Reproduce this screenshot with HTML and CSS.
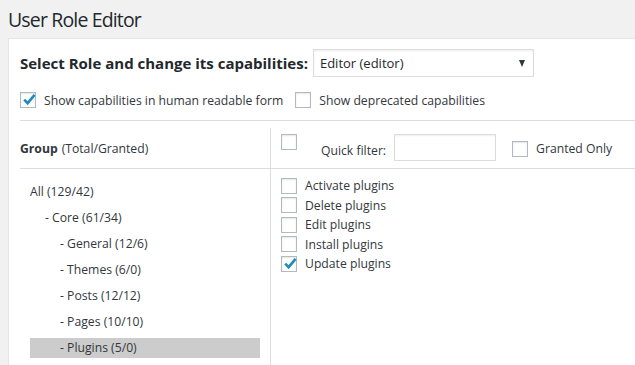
FILE: index.html
```html
<!DOCTYPE html>
<html lang="en">
<head>
    <meta charset="UTF-8">
    <title>User Role Editor</title>
    <link rel="stylesheet" href="styles.css">
</head>
<body>
    <div class="wrap">
        <h1>User Role Editor</h1>
        <div class="panel">
            <div class="role-row">
                <span class="role-label">Select Role and change its capabilities:</span>
                <div class="select">
                    <span>Editor (editor)</span>
                    <span class="arrow"></span>
                </div>
            </div>
            <div class="options">
                <label class="opt">
                    <span class="cb"><svg viewBox="0 0 16 16"><path d="M3.2 7.6 L6.6 11.2 L13.6 2.8"/></svg></span>
                    Show capabilities in human readable form
                </label>
                <label class="opt">
                    <span class="cb"></span>
                    Show deprecated capabilities
                </label>
            </div>

            <div class="editor">
                <div class="head">
                    <div class="head-left"><b>Group</b> (Total/Granted)</div>
                    <div class="head-right">
                        <span class="cb"></span>
                        <span class="qf-label">Quick filter:</span>
                        <span class="qf-input"></span>
                        <label class="granted">
                            <span class="cb"></span>
                            Granted Only
                        </label>
                    </div>
                </div>
                <div class="body">
                    <ul class="groups">
                        <li class="lvl0">All (129/42)</li>
                        <li class="lvl1">- Core (61/34)</li>
                        <li class="lvl2">- General (12/6)</li>
                        <li class="lvl2">- Themes (6/0)</li>
                        <li class="lvl2">- Posts (12/12)</li>
                        <li class="lvl2">- Pages (10/10)</li>
                        <li class="lvl2 active">- Plugins (5/0)</li>
                    </ul>
                    <ul class="caps">
                        <li><span class="cb"></span>Activate plugins</li>
                        <li><span class="cb"></span>Delete plugins</li>
                        <li><span class="cb"></span>Edit plugins</li>
                        <li><span class="cb"></span>Install plugins</li>
                        <li><span class="cb"><svg viewBox="0 0 16 16"><path d="M3.2 7.6 L6.6 11.2 L13.6 2.8"/></svg></span>Update plugins</li>
                    </ul>
                </div>
            </div>
        </div>
    </div>
</body>
</html>
```

FILE: styles.css
```css
/* page */
body {
    margin: 0;
    background-color: #f1f1f1;
    color: #32373c;
    font-family: "Open Sans", "Noto Sans", sans-serif;
    font-size: 12.2px;
    overflow: hidden;
}
.wrap {
    padding-left: 8px;
}
h1 {
    margin: 0;
    padding-top: 4px;
    height: 34px;
    font-size: 19.5px;
    font-weight: 400;
    letter-spacing: -0.85px;
    line-height: 31px;
    color: #23282d;
}

/* white box */
.panel {
    width: 640px;
    background-color: #fff;
    border-top: 1px solid #e5e5e5;
    border-left: 1px solid #e5e5e5;
    padding: 10px 0 0 11px;
    box-sizing: border-box;
    height: 340px;
}
.role-row {
    display: flex;
    align-items: center;
    height: 28px;
}
.role-label {
    font-weight: 700;
    font-size: 15px;
    color: #23282d;
    margin-right: 5px;
}
.select {
    width: 221px;
    height: 28px;
    box-sizing: border-box;
    border: 1px solid #ddd;
    box-shadow: inset 0 1px 2px rgba(0, 0, 0, 0.07);
    display: flex;
    align-items: center;
    justify-content: space-between;
    padding: 0 8px 0 6px;
    font-size: 13px;
    color: #23282d;
}
.arrow {
    width: 0;
    height: 0;
    border-left: 3.5px solid transparent;
    border-right: 3.5px solid transparent;
    border-top: 7px solid #32373c;
}

.options {
    display: flex;
    gap: 12px;
    margin-top: 15px;
    height: 16px;
    align-items: center;
}
.opt, .granted {
    display: flex;
    align-items: center;
    gap: 8px;
}

/* checkbox */
.cb {
    width: 16px;
    height: 16px;
    box-sizing: border-box;
    border: 1px solid #b4b9be;
    background-color: #fff;
    box-shadow: inset 0 1px 2px rgba(0, 0, 0, 0.1);
    flex: none;
    position: relative;
}
.cb svg {
    position: absolute;
    left: 0;
    top: -1px;
    width: 16px;
    height: 16px;
    fill: none;
    stroke: #1e8cbe;
    stroke-width: 2.6;
    overflow: visible;
}

/* capabilities editor */
.editor {
    margin-top: 12px;
    border-top: 1px solid #ddd;
}
.head {
    display: flex;
    height: 47px;
    border-bottom: 1px solid #ddd;
}
.head-left {
    width: 251px;
    padding-top: 7px;
    display: flex;
    align-items: center;
    position: relative;
}
.head-left::after {
    content: "";
    position: absolute;
    right: 0;
    top: 7px;
    bottom: 0;
    border-right: 1px solid #ddd;
}
.head-left b {
    margin-right: 4px;
}
.head-right {
    display: flex;
    align-items: flex-start;
    padding: 13px 0 0 10px;
}
.qf-label {
    margin: 8px 8px 0 24px;
}
.qf-input {
    width: 102px;
    height: 27px;
    box-sizing: border-box;
    border: 1px solid #ddd;
    box-shadow: inset 0 1px 2px rgba(0, 0, 0, 0.07);
}
.granted {
    margin: 6px 0 0 16px;
}

.body {
    display: flex;
    height: 200px;
}
.groups {
    list-style: none;
    margin: 0;
    width: 251px;
    box-sizing: border-box;
    border-right: 1px solid #ddd;
    padding: 13px 10px 0 10px;
}
.groups li {
    height: 20px;
    line-height: 20px;
    margin-bottom: 6px;
}
.lvl1 {
    padding-left: 15px;
}
.lvl2 {
    padding-left: 30px;
}
.groups .active {
    background-color: #ccc;
}
.caps {
    list-style: none;
    margin: 0;
    padding: 7px 0 0 10px;
}
.caps li {
    display: flex;
    align-items: center;
    gap: 8px;
    height: 19.5px;
}
```
